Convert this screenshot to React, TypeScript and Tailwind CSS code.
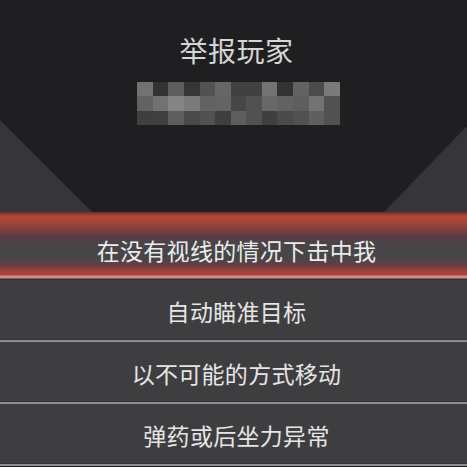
const mosaic = [
  ['#727272', '#333333', '#5e5e5e', '#363636', '#525252', '#666666', '#414141', '#414141', '#737373', '#333333', '#626262', '#4b4b4b', '#7a7a7a'],
  ['#626262', '#727272', '#848484', '#7a7a7a', '#626262', '#636363', '#464646', '#515151', '#686868', '#626262', '#5e5e5e', '#737373', '#515151'],
  ['#3f3f3f', '#404040', '#5e5e5e', '#494949', '#515151', '#3f3f3f', '#5e5e5e', '#515151', '#3f3f3f', '#4a4a4a', '#515151', '#5f5f5f', '#515151'],
];

const reasons = ['自动瞄准目标', '以不可能的方式移动', '弹药或后坐力异常'];

const ReportHeader = () => (
  <div className="relative h-[212px] shrink-0">
    {/* angled side panels behind the title card */}
    <svg className="absolute inset-0" width="467" height="212" viewBox="0 0 467 212">
      <polygon points="0,120 92,212 0,212" fill="#363638" />
      <polygon points="467,126 384,212 467,212" fill="#363638" />
    </svg>
    <div className="relative flex flex-col items-center pt-[30px] pl-[6px]">
      <h1 className="text-[28px] leading-[40px] text-[#d6d6d6] tracking-[0.5px]">举报玩家</h1>
      <div className="mt-[12px] ml-[4px] grid grid-cols-[repeat(13,15.6px)] grid-rows-[repeat(3,14.4px)]">
        {mosaic.flat().map((c, i) => (
          <div key={i} style={{ backgroundColor: c }} />
        ))}
      </div>
    </div>
  </div>
);

export default function App() {
  return (
    <div className="w-[467px] h-[467px] overflow-hidden bg-[#1f1f21] flex flex-col font-['Noto_Sans_CJK_SC','Noto_Sans',sans-serif]">
      <ReportHeader />

      {/* selected reason */}
      <div className="h-[68px] shrink-0 flex items-center justify-center pt-[8px] pl-[6px] bg-[linear-gradient(to_bottom,#6e2a24_0px,#b2473a_4px,#a8443a_10px,#5c3c46_24px,#474548_32px,#464548_46px,#6c3c42_54px,#a6433a_60px,#a8443a_63px,#d48c8c_64px,#d08888_66px,#2e2e32_67px)]">
        <span className="text-[23px] leading-[32px] text-[#ececec] tracking-[0.3px]">在没有视线的情况下击中我</span>
      </div>

      {reasons.map((r) => (
        <div key={r} className="shrink-0">
          <div className="h-[60px] flex items-center justify-center pt-[3px] pl-[6px] bg-[#3e3e40] border-b border-[#34343a]">
            <span className="text-[23px] leading-[32px] text-[#e6e6e6] tracking-[0.3px]">{r}</span>
          </div>
          <div className="h-[2px] bg-[#8c8c92]" />
        </div>
      ))}
    </div>
  );
}
